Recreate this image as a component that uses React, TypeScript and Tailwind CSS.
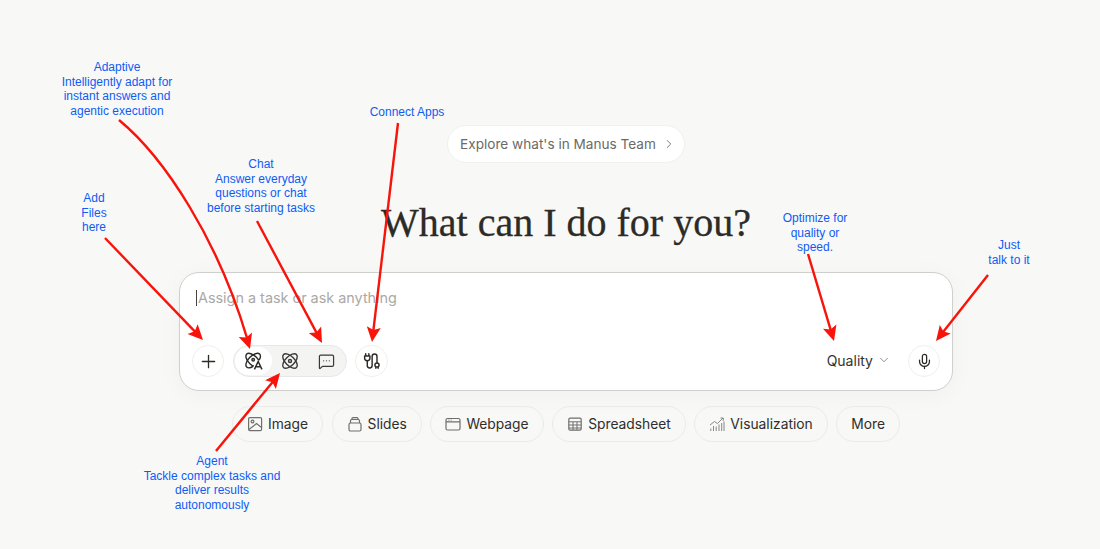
import React from "react";
import { Plus, ChevronRight, ChevronDown, Mic, MessageSquareMore } from "lucide-react";

const sans = "font-['Inter','Liberation_Sans',sans-serif]";

function Atom() {
  return (
    <svg viewBox="0 0 24 24" width="20" height="20" fill="none" stroke="currentColor" strokeWidth="1.7">
      <ellipse cx="12" cy="12" rx="11" ry="5.500" transform="rotate(45 12 12)" />
      <ellipse cx="12" cy="12" rx="11" ry="5.500" transform="rotate(-45 12 12)" />
      <circle cx="12" cy="12" r="1.800" />
    </svg>
  );
}

function AtomA() {
  return (
    <svg viewBox="0 0 24 24" width="20" height="20" fill="none" stroke="currentColor" strokeWidth="1.7">
      <defs>
        <clipPath id="atom-cut">
          <path d="M0 0H24V11H14L10 22H0Z" />
        </clipPath>
      </defs>
      <g clipPath="url(#atom-cut)">
        <ellipse cx="11" cy="11.500" rx="11" ry="5.500" transform="rotate(45 11 11.500)" />
        <ellipse cx="11" cy="11.500" rx="11" ry="5.500" transform="rotate(-45 11 11.500)" />
        <circle cx="11" cy="10.500" r="1.500" />
      </g>
      <path d="M12.500 22 17 12.500 21.500 22M14 19h6" strokeWidth="1.800" />
    </svg>
  );
}

function Plug() {
  return (
    <svg viewBox="0 0 20 20" width="18" height="18" fill="none" stroke="currentColor" strokeWidth="1.600" strokeLinecap="round" strokeLinejoin="round">
      <path d="M3 2v2.500M6.500 2v2.500M1.800 4.500h5.900v2.300a2.950 2.950 0 0 1-5.900 0V4.500z" />
      <path d="M4.750 9.800V15a2.700 2.700 0 0 0 5.400 0V5a2.700 2.700 0 0 1 5.400 0v7" />
      <circle cx="15.550" cy="14.500" r="2.300" />
      <path d="M14.300 16.600v1.400M16.800 16.600v1.400" />
    </svg>
  );
}

const iconProps = {
  viewBox: "0 0 16 16",
  width: 16,
  height: 16,
  fill: "none",
  stroke: "#6f6f6c",
  strokeWidth: 1.200,
};

function ImageGlyph() {
  return (
    <svg {...iconProps}>
      <rect x="1.600" y="1.600" width="13" height="13" rx="1.300" />
      <circle cx="5.500" cy="5.500" r="1.400" />
      <path d="M2 13.500 9.500 7.500 14.500 11.500" />
    </svg>
  );
}

function SlidesGlyph() {
  return (
    <svg {...iconProps}>
      <rect x="2" y="7" width="12" height="8" rx="1.500" />
      <path d="M3.500 7V4.800a1.300 1.300 0 0 1 1.300-1.300h6.400a1.300 1.300 0 0 1 1.300 1.300V7" />
      <path d="M5 3.500V2.600a1 1 0 0 1 1-1h4a1 1 0 0 1 1 1v.9" />
    </svg>
  );
}

function WebGlyph() {
  return (
    <svg {...iconProps}>
      <rect x="1" y="2.500" width="14" height="11.500" rx="1.500" />
      <path d="M1 5.800h14M3.500 4.200h.8M5.700 4.200h.8" />
    </svg>
  );
}

function TableGlyph() {
  return (
    <svg {...iconProps}>
      <rect x="1.800" y="2.200" width="12.400" height="12" rx="1.400" />
      <path d="M1.800 5.800h12.400M1.800 9h12.400M1.800 12h12.400M6 5.800v8.400M10 5.800v8.400" strokeWidth="1" />
    </svg>
  );
}

function VizGlyph() {
  return (
    <svg {...iconProps} strokeWidth={0.900} stroke="#7a7a77">
      <path d="M1 9 5.500 5.500 8.500 7.500 14 2" />
      <path d="M11.500 2H14.300V4.800" />
      <path d="M1.800 15v-2.500M4.500 15v-5M7.200 15v-4.500M10 15V8.500M12.700 15V7M15 15V5.500" />
    </svg>
  );
}

function Chip({ icon, label }: { icon?: React.ReactNode; label: string }) {
  return (
    <div className="flex h-9 items-center gap-[5px] rounded-full border border-[#ebebe8] px-[14px] text-[13.800px] text-[#2f2e2a]">
      {icon}
      <span>{label}</span>
    </div>
  );
}

function Note({ className, lines }: { className: string; lines: string[] }) {
  return (
    <div className={`absolute -translate-x-1/2 whitespace-nowrap text-center font-['Liberation_Sans',sans-serif] text-[12px] leading-[14.670px] text-[#0f5cf5] ${className}`}>
      {lines.map((l) => (
        <div key={l}>{l}</div>
      ))}
    </div>
  );
}

const RED = "#f8130b";

function Head({ x, y, fromX, fromY }: { x: number; y: number; fromX: number; fromY: number }) {
  const angle = (Math.atan2(y - fromY, x - fromX) * 180) / Math.PI;
  return <path d="M0 0 L-15 -7 L-12 0 L-15 7 Z" fill={RED} stroke="none" transform={`translate(${x} ${y}) rotate(${angle})`} />;
}

function Arrows() {
  const lines: [number, number, number, number][] = [
    [105, 238, 203, 340],
    [257, 221, 322, 343],
    [398, 123, 372, 342],
    [216, 451, 280, 373],
    [808, 254, 834, 341],
    [988, 275, 936, 341],
  ];
  return (
    <svg className="pointer-events-none absolute inset-0" width="1100" height="549" viewBox="0 0 1100 549" fill="none" stroke={RED} strokeWidth="2.400">
      <path d="M119 120 C165 158 218 240 247 338" />
      <Head x={250} y={349} fromX={238} fromY={312} />
      {lines.map(([a, b, c, d]) => (
        <g key={`${a}-${b}`}>
          <path d={`M${a} ${b} L${a + (c - a) * 0.95} ${b + (d - b) * 0.95}`} />
          <Head x={c} y={d} fromX={a} fromY={b} />
        </g>
      ))}
    </svg>
  );
}

const circle = "flex h-8 items-center justify-center rounded-full border border-[#efefed] text-[#2c2b27]";

export default function App() {
  return (
    <div className={`relative flex h-[549px] w-[1100px] flex-col items-center overflow-hidden bg-[#f8f8f7] pl-[32px] pt-[125px] ${sans}`}>
      <div className="flex h-[38px] items-center gap-[6px] rounded-full border border-[#f0f0ee] bg-white pl-[12px] pr-[8px] text-[13.600px] text-[#6b6a66]">
        <span>Explore what's in Manus Team</span>
        <ChevronRight size={14} strokeWidth={1.5} />
      </div>

      <h1 className="mt-[38px] h-[44px] font-['Liberation_Serif',serif] text-[40px] leading-[44px] text-[#2c2b27] [-webkit-text-stroke:0.3px_#2c2b27]">
        What can I do for you?
      </h1>

      <div className="mt-[27px] flex h-[119px] w-[774px] flex-col justify-between rounded-[20px] border border-[#cfcfcc] bg-white pb-[13px] pl-[12px] pr-[12px] pt-[15px] shadow-[0_4px_24px_rgba(0,0,0,0.035)]">
        <div className="flex h-5 items-center pl-[4px] text-[14.400px] text-[#aaa9a6]">
          <span className="mr-[1px] h-[16px] w-px bg-[#444]" />
          Assign a task or ask anything
        </div>
        <div className="flex items-center">
          <div className={`${circle} w-8`}>
            <Plus size={21} strokeWidth={1.500} />
          </div>
          <div className="ml-[9px] flex h-8 w-[114px] items-center rounded-full border border-[#e8e8e6] bg-[#f4f4f3] p-[1px] text-[#3a3935]">
            <div className="flex h-[28px] w-[37px] items-center justify-center rounded-full bg-white text-[#2c2b27]">
              <AtomA />
            </div>
            <div className="flex w-[36px] items-center justify-center">
              <Atom />
            </div>
            <div className="flex w-[36px] items-center justify-center">
              <MessageSquareMore size={17} strokeWidth={1.700} />
            </div>
          </div>
          <div className={`${circle} ml-[8px] w-[33px]`}>
            <Plug />
          </div>
          <div className="mb-[2px] ml-auto flex items-center gap-[4px] text-[14px] text-[#34322d]">
            <span>Quality</span>
            <ChevronDown size={14} strokeWidth={1.400} className="text-[#777]" />
          </div>
          <div className={`${circle} ml-[17px] w-8`}>
            <Mic size={17} strokeWidth={1.800} />
          </div>
        </div>
      </div>

      <div className="mt-[15px] flex items-center gap-[8.500px]">
        <Chip label="Image" icon={<ImageGlyph />} />
        <Chip label="Slides" icon={<SlidesGlyph />} />
        <Chip label="Webpage" icon={<WebGlyph />} />
        <Chip label="Spreadsheet" icon={<TableGlyph />} />
        <Chip label="Visualization" icon={<VizGlyph />} />
        <Chip label="More" />
      </div>

      <Note className="left-[117px] top-[60px]" lines={["Adaptive", "Intelligently adapt for", "instant answers and", "agentic execution"]} />
      <Note className="left-[261px] top-[157px]" lines={["Chat", "Answer everyday", "questions or chat", "before starting tasks"]} />
      <Note className="left-[94px] top-[191px]" lines={["Add", "Files", "here"]} />
      <Note className="left-[407px] top-[105px]" lines={["Connect Apps"]} />
      <Note className="left-[815px] top-[211px]" lines={["Optimize for", "quality or", "speed."]} />
      <Note className="left-[1009px] top-[238px]" lines={["Just", "talk to it"]} />
      <Note className="left-[212px] top-[454px]" lines={["Agent", "Tackle complex tasks and", "deliver results", "autonomously"]} />
      <Arrows />
    </div>
  );
}
